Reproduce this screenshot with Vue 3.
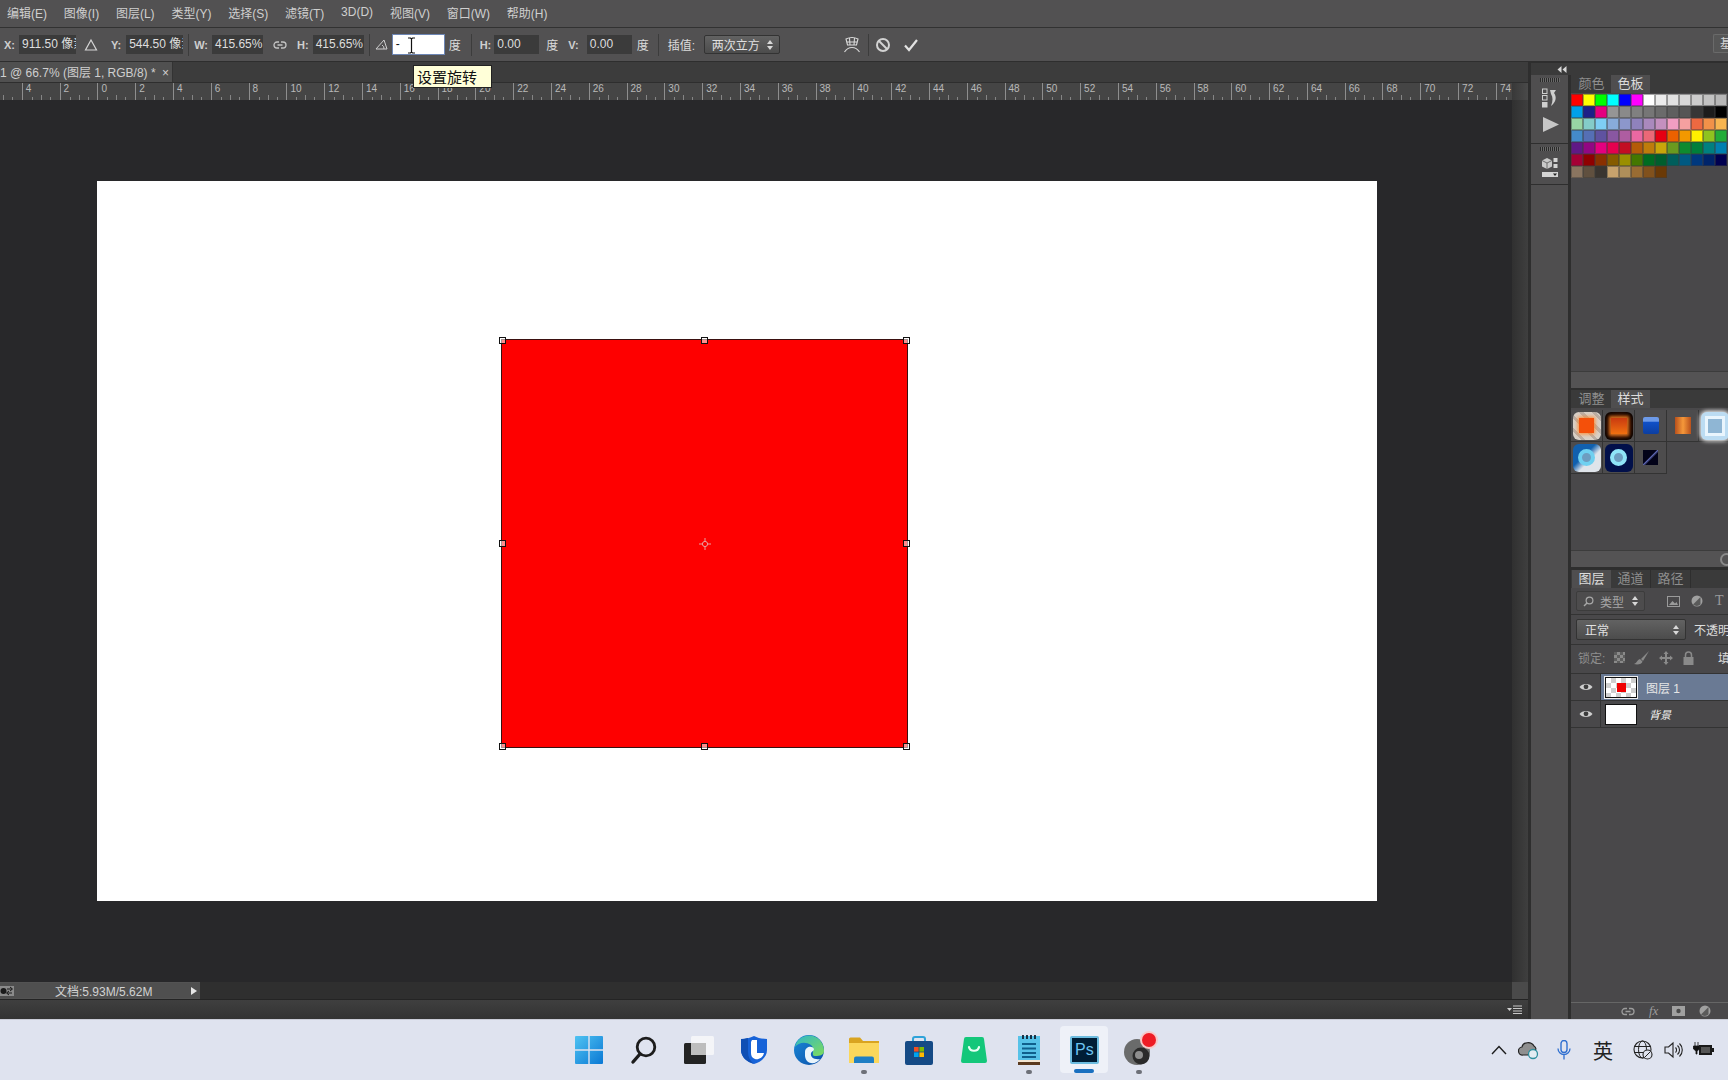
<template>
  <div class="ps-window">
    <!-- menu bar -->
    <div class="menu-bar">
      <span v-for="m in menus" :key="m">{{ m }}</span>
    </div>

    <!-- transform options -->
    <div class="options-bar">
      <span class="lbl lbl-x">X:</span>
      <span class="field f-xy">911.50 像素</span>
      <svg class="delta" width="14" height="14" viewBox="0 0 14 14"><path d="M7 2 L12.5 12 H1.5 Z" fill="none" stroke="#d5d5d5" stroke-width="1.2"/></svg>
      <span class="lbl lbl-y">Y:</span>
      <span class="field f-xy">544.50 像素</span>
      <span class="sep sep-a"></span>
      <span class="lbl">W:</span>
      <span class="field f-wh">415.65%</span>
      <svg class="chain" width="14" height="10" viewBox="0 0 14 10"><path d="M6 2 H4 a3 3 0 0 0 0 6 H6 M8 2 H10 a3 3 0 0 1 0 6 H8 M4.5 5 H9.5" fill="none" stroke="#c4c4c4" stroke-width="1.3"/></svg>
      <span class="lbl lbl-h">H:</span>
      <span class="field f-wh">415.65%</span>
      <span class="sep sep-b"></span>
      <svg class="angle" width="13" height="11" viewBox="0 0 13 11"><path d="M1 10 H12 L9 1 Z M9 10 a4 4 0 0 0 -2 -4" fill="none" stroke="#cfcfcf" stroke-width="1"/></svg>
      <span class="field f-rot">
        <span>-</span>
        <svg class="ibeam" width="9" height="17" viewBox="0 0 9 17"><path d="M1 1 H3.5 L4.5 2 L5.5 1 H8 M4.5 2 V15 M1 16 H3.5 L4.5 15 L5.5 16 H8" fill="none" stroke="#111" stroke-width="1.2"/></svg>
      </span>
      <span class="unit">度</span>
      <span class="sep sep-c"></span>
      <span class="lbl">H:</span>
      <span class="field f-skew">0.00</span>
      <span class="unit unit-wide">度</span>
      <span class="lbl lbl-v">V:</span>
      <span class="field f-skew">0.00</span>
      <span class="unit">度</span>
      <span class="sep sep-d"></span>
      <span class="interp">插值:</span>
      <span class="select interp-select">两次立方<i class="updown"></i></span>
      <svg class="warp" width="18" height="18" viewBox="0 0 18 18"><path d="M3 3 C7 1 11 1 15 3 L13.5 9 H4.5 Z M6.5 2 L7 9 M11.5 2 L11 9 M4 6 H14 M1.5 16 C4 12 7 11.5 9 11.5 C11 11.5 14 12 16.5 16" fill="none" stroke="#dadada" stroke-width="1.1"/></svg>
      <span class="sep sep-e"></span>
      <svg class="cancel" width="16" height="16" viewBox="0 0 16 16"><circle cx="8" cy="8" r="6" fill="none" stroke="#d2d2d2" stroke-width="2"/><path d="M4 4 L12 12" stroke="#d2d2d2" stroke-width="2"/></svg>
      <svg class="commit" width="16" height="14" viewBox="0 0 16 14"><path d="M2 7.5 L6 12 L14 2" fill="none" stroke="#e2e2e2" stroke-width="2.2"/></svg>
      <span class="essentials">基</span>
    </div>

    <div class="workspace">
      <!-- document column -->
      <div class="doc-col">
        <div class="tab-row">
          <div class="doc-tab">1 @ 66.7% (图层 1, RGB/8) * <span class="tab-x">×</span></div>
        </div>
        <div class="ruler-row">
          <div class="ruler">
            <div v-for="t in rulerTicks" :key="t.id" class="tick">{{ t.label }}</div>
          </div>
          <div class="ruler-end"></div>
        </div>
        <div class="canvas-row">
          <div class="canvas">
            <div class="paper">
              <div class="layer-red">
                <i class="handle h-tl"></i><i class="handle h-tc"></i><i class="handle h-tr"></i>
                <i class="handle h-ml"></i><i class="handle h-mr"></i>
                <i class="handle h-bl"></i><i class="handle h-bc"></i><i class="handle h-br"></i>
                <svg class="pivot" width="12" height="12" viewBox="0 0 12 12"><circle cx="6" cy="6" r="2.6" fill="none" stroke="#e8a0a0" stroke-width="1"/><path d="M6 0 V4 M6 8 V12 M0 6 H4 M8 6 H12" stroke="#e8a0a0" stroke-width="1"/></svg>
              </div>
            </div>
          </div>
          <div class="v-scroll"></div>
        </div>
        <div class="status-row">
          <div class="status">
            <svg width="14" height="10" viewBox="0 0 14 10"><rect width="14" height="10" fill="#8a8a8a"/><circle cx="3.500" cy="5" r="3" fill="#1a1a1a"/><path d="M7 3 H12 M7 7 H12 M10 1 L12.500 3 L10 5 M9 5 L6.500 7 L9 9" fill="none" stroke="#1a1a1a" stroke-width="1"/></svg>
            <span class="status-text">文档:5.93M/5.62M</span>
            <i class="status-arrow"></i>
          </div>
          <div class="status-rest"></div>
          <div class="corner"></div>
        </div>
        <div class="h-scroll">
          <svg class="h-menu" width="16" height="9" viewBox="0 0 16 9"><path d="M0 3 H5 L2.5 6 Z" fill="#d0d0d0"/><path d="M6 1 H15 M6 3.500 H15 M6 6 H15 M6 8.500 H15" stroke="#c8c8c8" stroke-width="1"/></svg>
        </div>
      </div>

      <!-- right side docks -->
      <div class="side">
        <div class="collapse-bar">
          <svg width="10" height="7" viewBox="0 0 10 7"><path d="M4.500 0 L0.500 3.500 L4.500 7 Z M9.500 0 L5.500 3.500 L9.500 7 Z" fill="#d6d6d6"/></svg>
        </div>
        <div class="side-body">
          <div class="dock">
            <div class="dock-group g1">
              <i class="grip"></i>
              <svg width="16" height="20" viewBox="0 0 16 20">
                <rect x="0.500" y="1" width="4.500" height="4.500" fill="none" stroke="#cfcfcf"/>
                <rect x="0.500" y="7.500" width="4.500" height="4.500" fill="none" stroke="#cfcfcf"/>
                <rect x="0" y="14" width="5.500" height="5.500" fill="#cfcfcf"/>
                <path d="M8 2 H14 L12 5 C15 9 14 14 9 18 C11 13 11 9 9 6 Z" fill="#cfcfcf"/>
              </svg>
              <svg class="play" width="16" height="15" viewBox="0 0 16 15"><path d="M0 0 L16 7.500 L0 15 Z" fill="#c6c6c6"/></svg>
            </div>
            <div class="dock-group g2">
              <i class="grip"></i>
              <svg width="16" height="21" viewBox="0 0 16 21">
                <path d="M5 1 L10 3.500 V9.500 L5 12 L0 9.500 V3.500 Z" fill="#c9c9c9"/>
                <path d="M0 3.500 L5 6 L10 3.500 M5 6 V12" fill="none" stroke="#555" stroke-width="0.800"/>
                <rect x="11.500" y="1" width="4" height="4" fill="#d4d4d4"/>
                <rect x="11.500" y="7" width="4" height="4" fill="#d4d4d4"/>
                <rect x="0" y="15" width="16" height="5" fill="#d4d4d4"/>
                <path d="M11 16.500 H15 L13 19 Z" fill="#222"/>
              </svg>
            </div>
          </div>

          <div class="panels">
            <!-- swatches -->
            <section class="panel panel-swatch">
              <div class="panel-tabs">
                <span class="ptab">颜色</span>
                <span class="ptab active">色板</span>
              </div>
              <div class="swatches">
                <div v-for="(row, r) in swatchRows" :key="r" class="swatch-row">
                  <i v-for="c in row" :key="c" class="swatch" :style="{ background: c }"></i>
                </div>
              </div>
              <div class="panel-strip"></div>
            </section>

            <!-- styles -->
            <section class="panel panel-style">
              <div class="panel-tabs">
                <span class="ptab">调整</span>
                <span class="ptab active">样式</span>
              </div>
              <div class="styles">
                <div class="style-cell"><i class="st st1"><b></b></i></div>
                <div class="style-cell"><i class="st st2"><b></b></i></div>
                <div class="style-cell"><i class="st st3"><b></b></i></div>
                <div class="style-cell"><i class="st st4"><b></b></i></div>
                <div class="style-cell"><i class="st st5"><b></b></i></div>
                <div class="style-cell"><i class="st st6"><b></b></i></div>
                <div class="style-cell"><i class="st st7"><b></b></i></div>
                <div class="style-cell"><i class="st st8"><b></b></i></div>
              </div>
              <div class="panel-strip"><i class="strip-round"></i></div>
            </section>

            <!-- layers -->
            <section class="panel panel-layers">
              <div class="panel-tabs">
                <span class="ptab active first">图层</span>
                <span class="ptab bordered">通道</span>
                <span class="ptab bordered">路径</span>
              </div>
              <div class="filter-row">
                <span class="select filter-select">
                  <svg width="11" height="11" viewBox="0 0 11 11"><circle cx="6.500" cy="4.500" r="3.400" fill="none" stroke="#a8a8a8" stroke-width="1.200"/><path d="M4 7 L1 10" stroke="#a8a8a8" stroke-width="1.500"/></svg>
                  类型<i class="updown"></i>
                </span>
                <svg class="fi-img" width="13" height="11" viewBox="0 0 13 11"><rect x="0.500" y="0.500" width="12" height="10" fill="none" stroke="#9a9a9a"/><path d="M2 9 L5.500 5 L8 7.500 L9.500 6 L11 9 Z" fill="#9a9a9a"/></svg>
                <svg class="fi-adj" width="12" height="12" viewBox="0 0 12 12"><circle cx="6" cy="6" r="5.500" fill="#a0a0a0"/><path d="M9.500 2 L2 9.500 A5.500 5.500 0 0 0 9.500 9.500 Z" fill="#5a5a5a"/></svg>
                <span class="fi-t">T</span>
              </div>
              <div class="blend-row">
                <span class="select blend-select">正常<i class="updown"></i></span>
                <span class="opacity">不透明度：</span>
              </div>
              <div class="lock-row">
                <span class="lock-label">锁定:</span>
                <i class="lock-check"></i>
                <svg class="lk-brush" width="16" height="14" viewBox="0 0 16 14"><path d="M15 0 L7 8 L9 10 Z M6 8 C3 9 3 12 0 13 C4 14 8 13 8.500 10.500 Z" fill="#8a8a8a"/></svg>
                <svg class="lk-move" width="14" height="14" viewBox="0 0 14 14"><path d="M7 0 L9.500 3 H8 V6 H11 V4.500 L14 7 L11 9.500 V8 H8 V11 H9.500 L7 14 L4.500 11 H6 V8 H3 V9.500 L0 7 L3 4.500 V6 H6 V3 H4.500 Z" fill="#8a8a8a"/></svg>
                <svg class="lk-lock" width="11" height="14" viewBox="0 0 11 14"><path d="M2.500 6 V4 a3 3 0 0 1 6 0 V6" fill="none" stroke="#8a8a8a" stroke-width="1.500"/><rect x="0.500" y="6" width="10" height="8" fill="#8a8a8a"/></svg>
                <span class="fill">填充：</span>
              </div>
              <div class="layer-row selected">
                <span class="eye-col"><svg width="14" height="10" viewBox="0 0 14 10"><path d="M0.500 5 C3 1 11 1 13.500 5 C11 9 3 9 0.500 5 Z" fill="#cfcfcf"/><circle cx="7" cy="4.800" r="2.400" fill="#3c3c3c"/></svg></span>
                <span class="thumb thumb-checker"><i></i></span>
                <span class="layer-name">图层 1</span>
              </div>
              <div class="layer-row">
                <span class="eye-col"><svg width="14" height="10" viewBox="0 0 14 10"><path d="M0.500 5 C3 1 11 1 13.500 5 C11 9 3 9 0.500 5 Z" fill="#cfcfcf"/><circle cx="7" cy="4.800" r="2.400" fill="#3c3c3c"/></svg></span>
                <span class="thumb thumb-white"></span>
                <span class="layer-name bg-name">背景</span>
              </div>
              <div class="layers-empty"></div>
              <div class="layers-foot">
                <svg width="14" height="9" viewBox="0 0 14 9"><path d="M6 1.500 H4 a3 3 0 0 0 0 6 H6 M8 1.500 H10 a3 3 0 0 1 0 6 H8 M4.500 4.500 H9.500" fill="none" stroke="#9c9c9c" stroke-width="1.300"/></svg>
                <span class="fx">fx</span>
                <svg width="13" height="10" viewBox="0 0 13 10"><rect width="13" height="10" fill="#a0a0a0"/><circle cx="6.500" cy="5" r="2.200" fill="#4a4a4a"/></svg>
                <svg width="12" height="12" viewBox="0 0 12 12"><circle cx="6" cy="6" r="5.500" fill="#a0a0a0"/><path d="M9.500 2 L2 9.500 A5.500 5.500 0 0 0 9.500 9.500 Z" fill="#5a5a5a"/></svg>
              </div>
            </section>
          </div>
        </div>
      </div>
    </div>

    <!-- windows taskbar -->
    <div class="taskbar">
      <div class="task-apps">
        <div class="app">
          <svg width="30" height="30" viewBox="0 0 30 30">
            <defs><linearGradient id="winb" x1="0" y1="0" x2="1" y2="1"><stop offset="0" stop-color="#4fc3f2"/><stop offset="1" stop-color="#0a78d4"/></linearGradient></defs>
            <path d="M1 2 a1 1 0 0 1 1 -1 H14.300 V14.300 H1 Z M15.700 1 H28 a1 1 0 0 1 1 1 V14.300 H15.700 Z M1 15.700 H14.300 V29 H2 a1 1 0 0 1 -1 -1 Z M15.700 15.700 H29 V28 a1 1 0 0 1 -1 1 H15.700 Z" fill="url(#winb)"/>
          </svg>
        </div>
        <div class="app">
          <svg width="30" height="30" viewBox="0 0 30 30"><circle cx="17" cy="12" r="8.800" fill="none" stroke="#1c1c1c" stroke-width="2.800"/><path d="M11 19 L4 27" stroke="#1c1c1c" stroke-width="3.400" stroke-linecap="round"/></svg>
        </div>
        <div class="app">
          <svg width="30" height="30" viewBox="0 0 30 30"><rect x="7" y="1" width="23" height="19" rx="1.500" fill="#f4f5f8"/><rect x="0" y="8" width="22" height="21" rx="1.500" fill="#232323"/><rect x="7" y="8" width="15" height="12" fill="#bdbdbd"/></svg>
        </div>
        <div class="app">
          <svg width="30" height="30" viewBox="0 0 30 30">
            <path d="M15 1 C19 3 23 4 28 4 V15 C28 22 22 27 15 29 C8 27 2 22 2 15 V4 C7 4 11 3 15 1 Z" fill="#1763d8"/>
            <path d="M2 15 V4 C5 4 7 3.500 9 3 V17 C9 22 11 26 15 29 C8 27 2 22 2 15 Z" fill="#0f4fb4"/>
            <path d="M13 5 H18 V18 H25 C24 23 19 25 16 24 C13 23 12 21 12 18 V7 Z" fill="#fff"/>
          </svg>
        </div>
        <div class="app">
          <svg width="32" height="32" viewBox="0 0 32 32">
            <defs>
              <linearGradient id="edgeA" x1="0" y1="0" x2="1" y2="1"><stop offset="0" stop-color="#2fb7c9"/><stop offset="1" stop-color="#7fdc5a"/></linearGradient>
              <linearGradient id="edgeB" x1="0" y1="0" x2="1" y2="1"><stop offset="0" stop-color="#1a8ad8"/><stop offset="1" stop-color="#0b4fa8"/></linearGradient>
            </defs>
            <circle cx="16" cy="16" r="15" fill="url(#edgeB)"/>
            <path d="M2 13 C4 3 14 0 20 2 C27 4 31 10 31 17 C31 21 27 22 22 22 C17 22 23 15 18 11 C12 7 5 9 2 13 Z" fill="url(#edgeA)"/>
            <path d="M12 18 C12 13 19 11 21 15 C21 17 19 17 18 19 C17 23 21 26 27 25 C23 31 13 31 12 22 Z" fill="#e9f4fb"/>
          </svg>
        </div>
        <div class="app running">
          <svg width="30" height="30" viewBox="0 0 30 30">
            <path d="M0 4 a1.500 1.500 0 0 1 1.500 -1.500 H11 L14 6 H30 V10 H0 Z" fill="#d9a420"/>
            <rect x="0" y="8" width="30" height="20" fill="#fbd75b"/>
            <path d="M5 28 V23.500 a2 2 0 0 1 2 -2 H23 a2 2 0 0 1 2 2 V28 Z" fill="#1f7fc4"/>
          </svg>
        </div>
        <div class="app">
          <svg width="30" height="30" viewBox="0 0 30 30">
            <path d="M9 7 V4 a2 2 0 0 1 2 -2 H19 a2 2 0 0 1 2 2 V7" fill="none" stroke="#2fa3d9" stroke-width="2"/>
            <rect x="1" y="6" width="28" height="24" rx="2" fill="#154a85"/>
            <rect x="10" y="12" width="4.600" height="4.600" fill="#f25022"/><rect x="15.400" y="12" width="4.600" height="4.600" fill="#7fba00"/>
            <rect x="10" y="17.400" width="4.600" height="4.600" fill="#00a4ef"/><rect x="15.400" y="17.400" width="4.600" height="4.600" fill="#ffb900"/>
          </svg>
        </div>
        <div class="app">
          <svg width="30" height="30" viewBox="0 0 30 30">
            <path d="M5 4 a2 2 0 0 1 2 -2 H23 a2 2 0 0 1 2 2 L28 26 a2 2 0 0 1 -2 2 H4 a2 2 0 0 1 -2 -2 Z" fill="#14c77a"/>
            <path d="M10 12 C11 17 19 17 20 12" fill="none" stroke="#e8fff4" stroke-width="2.200" stroke-linecap="round"/>
          </svg>
        </div>
        <div class="app running">
          <svg width="30" height="32" viewBox="0 0 30 32">
            <rect x="4" y="2" width="22" height="28" fill="#57c2e8"/>
            <rect x="4" y="26" width="22" height="2" fill="#f3e6d3"/><rect x="4" y="28" width="22" height="3" fill="#5a3a20"/>
            <path d="M8 10 H22 M8 14.500 H22 M8 19 H22 M8 23 H22" stroke="#0f5f8c" stroke-width="1.800"/>
            <path d="M9 1 V5 M13 1 V5 M17 1 V5 M21 1 V5" stroke="#123" stroke-width="1.800"/>
          </svg>
        </div>
        <div class="app active">
          <div class="ps-icon"><span>Ps</span></div>
        </div>
        <div class="app running">
          <svg width="38" height="38" viewBox="0 0 38 38">
            <circle cx="17" cy="21" r="13" fill="#6a6b6b"/>
            <circle cx="21" cy="25" r="8.500" fill="#2a2a2a"/>
            <circle cx="19" cy="24" r="4" fill="#8e8e8e"/>
            <circle cx="29" cy="9" r="9" fill="#f8c9c9"/>
            <circle cx="29" cy="9" r="7" fill="#ee1c25"/>
          </svg>
        </div>
      </div>

      <div class="tray">
        <svg class="t-chev" width="16" height="10" viewBox="0 0 16 10"><path d="M1 9 L8 1.500 L15 9" fill="none" stroke="#1d1d1d" stroke-width="1.400"/></svg>
        <svg class="t-cloud" width="22" height="20" viewBox="0 0 22 20"><path d="M5 15 a4 4 0 0 1 -1 -8 C5 2 13 1 16 6 a4.500 4.500 0 0 1 2 3 L10 15 Z" fill="#8f8f8f" stroke="#222" stroke-width="1.200"/><circle cx="15" cy="14" r="4.500" fill="#e3ecf2" stroke="#2f8f9e" stroke-width="1.300"/></svg>
        <svg class="t-mic" width="16" height="20" viewBox="0 0 16 20"><rect x="5" y="0.500" width="6" height="12" rx="3" fill="none" stroke="#2f6fd0" stroke-width="1.400"/><path d="M2 8.500 a6 6 0 0 0 12 0 M8 14.500 V19.500" fill="none" stroke="#2f6fd0" stroke-width="1.300"/></svg>
        <span class="t-lang">英</span>
        <svg class="t-globe" width="20" height="20" viewBox="0 0 20 20"><circle cx="9.500" cy="9.500" r="8.500" fill="none" stroke="#222" stroke-width="1.100"/><ellipse cx="9.500" cy="9.500" rx="4" ry="8.500" fill="none" stroke="#222"/><path d="M1.500 6.500 H17.500 M1.500 12.500 H17.500" stroke="#222"/><circle cx="14.500" cy="14.500" r="4.500" fill="#dfe3ef" stroke="#222" stroke-width="1.100"/><path d="M11.500 17.500 L17.500 11.500" stroke="#222"/></svg>
        <svg class="t-vol" width="20" height="18" viewBox="0 0 20 18"><path d="M1 6 H4.500 L9 2 V16 L4.500 12 H1 Z" fill="none" stroke="#222" stroke-width="1.100"/><path d="M11.500 6.500 a3.500 3.500 0 0 1 0 5 M13.500 4.500 a6 6 0 0 1 0 9 M15.500 2.500 a9 9 0 0 1 0 13" fill="none" stroke="#222" stroke-width="1.100"/></svg>
        <svg class="t-batt" width="21" height="16" viewBox="0 0 21 16"><path d="M2 0 V4 M5 0 V4 M0.500 4 H6.500 V7 L4 9 V12 H3 V9 L0.500 7 Z" fill="#111" stroke="#111" stroke-width="0.800"/><rect x="6" y="3" width="13" height="10" fill="#1a1a1a"/><rect x="8" y="5" width="9" height="6" fill="#555"/><rect x="19" y="6" width="2" height="4" fill="#1a1a1a"/></svg>
      </div>
    </div>

    <!-- tooltip over the options bar -->
    <div class="tooltip">设置旋转</div>
  </div>
</template>

<script setup>
const menus = ['编辑(E)', '图像(I)', '图层(L)', '类型(Y)', '选择(S)', '滤镜(T)', '3D(D)', '视图(V)', '窗口(W)', '帮助(H)']

// ruler runs from 6 left of the origin up to 74, a label every 2 units
const rulerTicks = []
for (let v = -6; v <= 74; v += 2) {
  rulerTicks.push({ id: v, label: Math.abs(v) })
}

const swatchRows = [
  ['#ff0000', '#ffff00', '#00ff00', '#00ffff', '#0000ff', '#ff00ff', '#ffffff', '#ebebeb', '#e1e1e1', '#d7d7d7', '#cccccc', '#c2c2c2', '#b7b7b7'],
  ['#00a0e9', '#1d2088', '#e4007f', '#959595', '#8a8a8a', '#808080', '#767676', '#6b6b6b', '#5f5f5f', '#555555', '#363636', '#1c1c1c', '#000000'],
  ['#98d5a4', '#84ccc9', '#7ecef4', '#88abda', '#8c97cb', '#8f82bc', '#aa89bd', '#c490bf', '#f19ec2', '#f5a0a0', '#ec6941', '#f19149', '#f8b551'],
  ['#448aca', '#556fb5', '#5f52a0', '#8957a1', '#ae5da1', '#ea68a2', '#eb6877', '#e60012', '#eb6100', '#f39800', '#fff100', '#8fc31f', '#22ac38'],
  ['#601986', '#920783', '#e4007f', '#e5004f', '#c30d23', '#b45b09', '#be7c0b', '#c9a50a', '#6a9a1f', '#0e8a2f', '#007f3b', '#008080', '#0080b0'],
  ['#a40035', '#8f0000', '#8a3000', '#855b00', '#9a8f00', '#447700', '#006c21', '#005e2d', '#005e5c', '#005982', '#00387e', '#00246a', '#000050'],
  ['#8a7560', '#60503f', '#3a3530', '#c7a26d', '#af8f5a', '#996c33', '#81511c', '#6a3906']
]
</script>

<style>
html, body {
  margin: 0;
  overflow: hidden;
  background: #28282a;
}
</style>

<style scoped>
.ps-window {
  position: relative;
  width: 1728px;
  height: 1080px;
  display: flex;
  flex-direction: column;
  overflow: hidden;
  font-family: "Liberation Sans", "Noto Sans CJK SC", sans-serif;
  font-size: 12px;
  color: #d4d4d4;
  background: #535353;
}

.menu-bar {
  height: 28px;
  flex: none;
  display: flex;
  align-items: center;
  gap: 16.8px;
  padding: 0 0 3px 7px;
  box-sizing: border-box;
  background: #525152;
  border-bottom: 1px solid #323232;
  color: #cfcfcf;
}

.options-bar {
  height: 34px;
  flex: none;
  display: flex;
  align-items: center;
  box-sizing: border-box;
  background: #525152;
  border-bottom: 1px solid #2e2e2e;
  position: relative;
}
.lbl { font-weight: bold; font-size: 11px; color: #cfcfcf; }
.lbl-x { margin-left: 4px; margin-right: 4px; }
.lbl-y { margin-left: 13px; margin-right: 5px; }
.lbl-h { margin-left: 10px; }
.lbl-v { margin-left: 10px; margin-right: 5px; }
.field {
  height: 19px;
  line-height: 19px;
  background: #3b3b3b;
  color: #dedede;
  padding-left: 3px;
  box-sizing: border-box;
  white-space: nowrap;
  overflow: hidden;
  display: inline-block;
  flex: none;
  font-size: 12px;
}
.f-xy { width: 57px; }
.f-wh { width: 51px; margin-left: 4px; }
.f-skew { width: 45px; margin-left: 3px; }
.f-rot {
  width: 51px;
  margin-left: 5px;
  background: #fff;
  color: #111;
  outline: 1px solid #6d86b4;
  position: relative;
}
.ibeam { position: absolute; left: 14px; top: 2px; }
.delta { margin-left: 8px; }
.chain { margin-left: 10px; }
.sep { width: 1px; height: 22px; background: #3c3c3c; flex: none; }
.sep-a { margin: 0 5px; }
.sep-b { margin: 0 5px; }
.sep-c { margin: 0 8px 0 10px; }
.sep-d { margin: 0 9px; }
.sep-e { margin: 0 6px 0 7px; }
.angle { flex: none; }
.unit { margin-left: 5px; font-size: 12px; color: #dcdcdc; }
.unit-wide { margin-left: 7px; }
.interp { color: #dcdcdc; width: 36px; flex: none; }
.select {
  display: inline-flex;
  align-items: center;
  box-sizing: border-box;
  border: 1px solid #333;
  border-radius: 2px;
  background: linear-gradient(#626262, #4c4c4c);
  color: #e0e0e0;
  position: relative;
  flex: none;
}
.interp-select {
  width: 76px;
  height: 19px;
  padding-left: 7px;
}
.updown {
  position: absolute;
  right: 6px;
  top: 50%;
  margin-top: -5px;
  width: 0;
  height: 0;
  border-left: 3px solid transparent;
  border-right: 3px solid transparent;
  border-bottom: 4px solid #d8d8d8;
}
.updown::after {
  content: "";
  position: absolute;
  left: -3px;
  top: 6px;
  border-left: 3px solid transparent;
  border-right: 3px solid transparent;
  border-top: 4px solid #d8d8d8;
}
.warp { margin-left: 63px; flex: none; }
.commit { margin-left: 12px; }
.essentials {
  position: absolute;
  right: 0;
  top: 6px;
  width: 15px;
  height: 19px;
  line-height: 19px;
  padding-left: 6px;
  box-sizing: border-box;
  border: 1px solid #6a6a6a;
  border-right: none;
  border-radius: 2px 0 0 2px;
  background: #565656;
  overflow: hidden;
}

.workspace {
  flex: 1;
  min-height: 0;
  display: flex;
}
.doc-col {
  width: 1528px;
  flex: none;
  display: flex;
  flex-direction: column;
}
.tab-row {
  height: 20px;
  flex: none;
  background: #3c3c3c;
  display: flex;
}
.doc-tab {
  width: 173px;
  box-sizing: border-box;
  line-height: 22px;
  background: #505050;
  white-space: nowrap;
  overflow: hidden;
  color: #cfcfcf;
  border-right: 1px solid #333;
}
.tab-x { margin-left: 3px; }
.ruler-row {
  height: 18px;
  flex: none;
  display: flex;
  border-top: 1px solid #2e2e2e;
  box-sizing: border-box;
}
.ruler {
  width: 1512px;
  flex: none;
  display: flex;
  overflow: hidden;
  background: #454545;
}
.tick {
  flex: 0 0 37.8px;
  box-sizing: border-box;
  border-left: 1px solid #8e8e8e;
  padding-left: 3px;
  font-size: 10px;
  line-height: 12px;
  color: #b9b9b9;
  background-image:
    linear-gradient(#858585, #858585),
    linear-gradient(#858585, #858585),
    linear-gradient(#858585, #858585);
  background-repeat: no-repeat;
  background-size: 1px 3px, 1px 5px, 1px 3px;
  background-position: 9px 100%, 18px 100%, 27px 100%;
}
.tick:first-child { margin-left: -16px; }
.ruler-end { flex: 1; background: linear-gradient(90deg, #383838, #4a4a4a); }

.canvas-row {
  flex: 1;
  min-height: 0;
  display: flex;
}
.canvas {
  width: 1512px;
  flex: none;
  background: #28282a;
  padding: 81px 0 0 97px;
  box-sizing: border-box;
}
.paper {
  position: relative;
  width: 1280px;
  height: 720px;
  background: #fff;
}
.layer-red {
  position: absolute;
  left: 405px;
  top: 159px;
  width: 405px;
  height: 407px;
  background: #fe0000;
  box-shadow: 0 0 0 1px #3a1010;
}
.handle {
  position: absolute;
  width: 5px;
  height: 5px;
  border: 1px solid #111;
  background: rgba(255, 255, 255, 0.55);
}
.h-tl { left: -3px; top: -3px; }
.h-tc { left: 199px; top: -3px; }
.h-tr { right: -3px; top: -3px; }
.h-ml { left: -3px; top: 200px; }
.h-mr { right: -3px; top: 200px; }
.h-bl { left: -3px; bottom: -3px; }
.h-bc { left: 199px; bottom: -3px; }
.h-br { right: -3px; bottom: -3px; }
.pivot { position: absolute; left: 197px; top: 198px; }
.v-scroll {
  width: 16px;
  flex: none;
  background: linear-gradient(90deg, #303030, #3f3f3f);
}

.status-row {
  height: 17px;
  flex: none;
  display: flex;
}
.status {
  width: 200px;
  flex: none;
  display: flex;
  align-items: center;
  background: #4f4f4f;
  box-sizing: border-box;
  position: relative;
  margin: 1px 0;
}
.status-text { margin-left: 41px; color: #d2d2d2; font-size: 12px; }
.status-arrow {
  position: absolute;
  left: 191px;
  top: 4px;
  border-left: 6px solid #e6e6e6;
  border-top: 4px solid transparent;
  border-bottom: 4px solid transparent;
}
.status-rest { flex: 1; background: #2f2f2f; }
.corner { width: 16px; flex: none; background: #4a4a4a; }
.h-scroll {
  height: 20px;
  flex: none;
  background: linear-gradient(#3f3f3f, #333);
  border-top: 1px solid #242424;
  box-sizing: border-box;
  display: flex;
  justify-content: flex-end;
  align-items: center;
  padding-right: 5px;
}

.side {
  flex: 1;
  min-width: 0;
  display: flex;
  flex-direction: column;
  background: #2e2e2e;
  padding-left: 3px;
}
.collapse-bar {
  height: 12px;
  flex: none;
  display: flex;
  justify-content: flex-end;
  padding-right: 161px;
  align-items: center;
  background: #3a3a3a;
  margin-top: 1px;
}
.side-body {
  flex: 1;
  min-height: 0;
  display: flex;
  gap: 3px;
}
.dock {
  width: 37px;
  flex: none;
  background: #4f4e4f;
  display: flex;
  flex-direction: column;
}
.dock-group {
  display: flex;
  flex-direction: column;
  align-items: center;
  border-bottom: 1px solid #2e2e2e;
}
.g1 { height: 68px; }
.g2 { height: 40px; }
.grip {
  width: 20px;
  height: 4px;
  margin: 3px 0 6px;
  background: repeating-linear-gradient(90deg, #2a2a2a 0 1px, #6a6a6a 1px 2px);
}
.play { margin-top: 9px; margin-left: 2px; }

.panels {
  flex: 1;
  min-width: 0;
  display: flex;
  flex-direction: column;
}
.panel {
  background: #49484a;
  display: flex;
  flex-direction: column;
  overflow: hidden;
}
.panel-swatch { height: 313px; margin-bottom: 2px; }
.panel-style { height: 177px; margin-bottom: 3px; }
.panel-layers { flex: 1; min-height: 0; }
.panel-tabs {
  height: 18px;
  flex: none;
  display: flex;
  background: #3a3a3a;
  padding-left: 1px;
  font-size: 13px;
}
.ptab {
  width: 39px;
  line-height: 18px;
  text-align: center;
  color: #8e8e8e;
}
.ptab.active { background: #4f4e4f; color: #dcdcdc; }
.ptab.bordered { border-right: 1px solid #2e2e2e; }
.swatches {
  flex: 1;
  padding-top: 1px;
}
.swatch-row { display: flex; }
.swatch {
  flex: 0 0 12px;
  height: 12px;
  box-sizing: border-box;
  border: 1px solid rgba(60, 60, 60, 0.45);
}
.panel-strip {
  height: 16px;
  flex: none;
  background: #545354;
  border-top: 1px solid #3c3c3c;
  position: relative;
}
.strip-round {
  position: absolute;
  right: -5px;
  top: 2px;
  width: 9px;
  height: 9px;
  border: 2px solid #8a8a8a;
  border-radius: 50%;
}

.styles {
  flex: 1;
  display: flex;
  flex-wrap: wrap;
  align-content: flex-start;
  width: 160px;
  padding-top: 2px;
}
.style-cell {
  width: 32px;
  height: 32px;
  box-sizing: border-box;
  border-right: 1px solid #333;
  border-bottom: 1px solid #333;
  display: flex;
  align-items: center;
  justify-content: center;
  background: #4d4c4d;
}
.st {
  width: 28px;
  height: 28px;
  border-radius: 6px;
  display: flex;
  align-items: center;
  justify-content: center;
}
.st b { display: block; }
.st1 { background: repeating-linear-gradient(45deg, #d8d0c8 0 6px, #b9aea6 6px 9px); }
.st1 b { width: 15px; height: 15px; background: #f4500a; box-shadow: 0 0 4px 1px #ff8a30; }
.st2 { background: radial-gradient(#5a1500, #0d0400 85%); }
.st2 b { width: 16px; height: 16px; background: linear-gradient(#c93a10, #f07010); box-shadow: 0 0 3px 2px #d9701e; }
.st3 b { width: 16px; height: 17px; background: linear-gradient(#6d9ae8 0 25%, #1050c8 30%, #0c3ea0); border-radius: 2px; }
.st4 b { width: 16px; height: 17px; background: linear-gradient(90deg, #b8501c, #f5983a 50%, #b8501c); }
.st5 { background: #bcdcf2; box-shadow: 0 0 4px 1px #fff; }
.st5 b { width: 14px; height: 14px; background: #8fb6d4; box-shadow: 0 0 0 3px #e9f5fd; }
.st6 { background: linear-gradient(135deg, #1160ae 40%, #dfe4ea 60%); }
.st6 b { width: 9px; height: 9px; background: #6d9dc0; border: 4px solid #6fd0f0; border-radius: 50%; }
.st7 { background: #02104a; }
.st7 b { width: 9px; height: 9px; background: #6d9dc0; border: 4px solid #8fe4f8; border-radius: 50%; }
.st8 { background: transparent; }
.st8 b { width: 15px; height: 15px; background: linear-gradient(135deg, #020218 45%, #5c66b0 50%, #020218 60%); }

.filter-row {
  height: 27px;
  flex: none;
  display: flex;
  align-items: center;
  border-bottom: 1px solid #333;
  position: relative;
  box-sizing: border-box;
}
.filter-select {
  width: 69px;
  height: 20px;
  margin-left: 5px;
  padding-left: 6px;
  gap: 6px;
  color: #a6a6a6;
  background: #4d4c4d;
  border-color: #3c3c3c;
}
.fi-img { margin-left: 22px; }
.fi-adj { margin-left: 11px; }
.fi-t { margin-left: 12px; font-family: "Liberation Serif", serif; font-size: 14px; color: #9a9a9a; }
.blend-row {
  height: 30px;
  flex: none;
  display: flex;
  align-items: center;
  border-bottom: 1px solid #333;
  box-sizing: border-box;
  white-space: nowrap;
}
.blend-select {
  width: 110px;
  height: 21px;
  margin-left: 5px;
  padding-left: 8px;
}
.opacity { margin-left: 8px; color: #dcdcdc; }
.lock-row {
  height: 29px;
  flex: none;
  display: flex;
  align-items: center;
  padding-bottom: 3px;
  border-bottom: 1px solid #333;
  box-sizing: border-box;
  white-space: nowrap;
  color: #8e8e8e;
}
.lock-label { margin-left: 7px; width: 36px; flex: none; }
.lock-check {
  width: 11px;
  height: 11px;
  flex: none;
  background: conic-gradient(#8a8a8a 25%, #5e5e5e 0 50%, #8a8a8a 0 75%, #5e5e5e 0) 0 0 / 6px 6px;
}
.lk-brush { margin-left: 9px; flex: none; }
.lk-move { margin-left: 9px; flex: none; }
.lk-lock { margin-left: 10px; flex: none; }
.fill { margin-left: 24px; color: #dcdcdc; }
.layer-row {
  height: 27px;
  flex: none;
  display: flex;
  align-items: center;
  border-bottom: 1px solid #333;
  box-sizing: border-box;
}
.layer-row.selected { background: #6a7a94; }
.eye-col {
  width: 30px;
  height: 100%;
  flex: none;
  display: flex;
  align-items: center;
  justify-content: center;
  background: #49484a;
  border-right: 1px solid #333;
  box-sizing: border-box;
}
.thumb {
  margin-left: 4px;
  width: 32px;
  height: 21px;
  flex: none;
  box-sizing: border-box;
  border: 1px solid #111;
  display: flex;
  align-items: center;
  justify-content: center;
}
.thumb-white { background: #fff; }
.thumb-checker {
  outline: 1px solid #eee;
  background: conic-gradient(#cfcfcf 25%, #fff 0 50%, #cfcfcf 0 75%, #fff 0) 0 0 / 10px 10px;
}
.thumb-checker i { width: 9px; height: 9px; background: #f00000; }
.layer-name { margin-left: 9px; color: #e6e6e6; font-size: 12px; }
.bg-name { margin-left: 12px; font-style: italic; color: #f4f4f4; font-size: 11px; }
.layers-empty { flex: 1; }
.layers-foot {
  height: 17px;
  flex: none;
  display: flex;
  align-items: center;
  border-top: 1px solid #666;
  padding-left: 50px;
  gap: 14px;
  box-sizing: border-box;
}
.fx { font-family: "Liberation Serif", serif; font-style: italic; color: #9c9c9c; font-size: 13px; }

.taskbar {
  height: 61px;
  flex: none;
  position: relative;
  display: flex;
  justify-content: center;
  background: #dfe3ef;
  border-top: 1px solid #c9ccd6;
  box-sizing: border-box;
}
.task-apps { display: flex; }
.app {
  width: 55.1px;
  height: 100%;
  position: relative;
  display: flex;
  align-items: center;
  justify-content: center;
  box-sizing: border-box;
}
.app.running::after, .app.active::after {
  content: "";
  position: absolute;
  bottom: 6px;
  left: 50%;
  width: 6px;
  height: 4px;
  margin-left: -3px;
  border-radius: 2px;
  background: #6d7078;
}
.app.active {
  width: 48px;
  height: 47px;
  margin: 6px 3.5px 0;
  border-radius: 4px;
  background: #eef1f8;
}
.app.active::after {
  width: 20px;
  margin-left: -10px;
  bottom: 0;
  background: #1a70c0;
}
.ps-icon {
  width: 29px;
  height: 28px;
  box-sizing: border-box;
  background: #001e36;
  border: 2px solid #6dbcdf;
  border-radius: 2px;
  color: #6cc4f2;
  display: flex;
  align-items: center;
  justify-content: center;
  font-size: 16px;
  font-family: "Liberation Sans", sans-serif;
}
.tray {
  position: absolute;
  left: 1491px;
  top: 0;
  height: 100%;
  box-sizing: border-box;
  display: flex;
  align-items: center;
}
.t-cloud { margin-left: 11px; }
.t-mic { margin-left: 16px; }
.t-lang { margin-left: 19px; width: 24px; font-size: 20px; color: #222; text-align: center; }
.t-globe { margin-left: 18px; }
.t-vol { margin-left: 11px; }
.t-batt { margin-left: 9px; }

.tooltip {
  position: absolute;
  left: 413px;
  top: 65px;
  width: 79px;
  height: 23px;
  box-sizing: border-box;
  line-height: 23px;
  padding-left: 3px;
  background: #ffffd8;
  border: 1px solid #222;
  color: #111;
  font-size: 15px;
}
</style>
